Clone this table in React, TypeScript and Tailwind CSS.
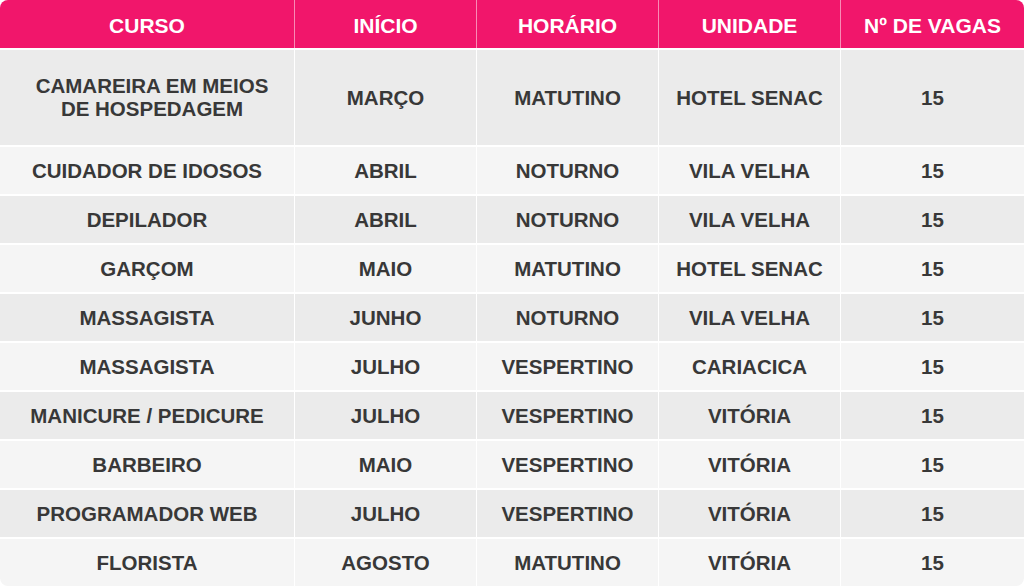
import React from 'react';

const rows = [
  ['CAMAREIRA EM MEIOS DE HOSPEDAGEM', 'MARÇO', 'MATUTINO', 'HOTEL SENAC', '15'],
  ['CUIDADOR DE IDOSOS', 'ABRIL', 'NOTURNO', 'VILA VELHA', '15'],
  ['DEPILADOR', 'ABRIL', 'NOTURNO', 'VILA VELHA', '15'],
  ['GARÇOM', 'MAIO', 'MATUTINO', 'HOTEL SENAC', '15'],
  ['MASSAGISTA', 'JUNHO', 'NOTURNO', 'VILA VELHA', '15'],
  ['MASSAGISTA', 'JULHO', 'VESPERTINO', 'CARIACICA', '15'],
  ['MANICURE / PEDICURE', 'JULHO', 'VESPERTINO', 'VITÓRIA', '15'],
  ['BARBEIRO', 'MAIO', 'VESPERTINO', 'VITÓRIA', '15'],
  ['PROGRAMADOR WEB', 'JULHO', 'VESPERTINO', 'VITÓRIA', '15'],
  ['FLORISTA', 'AGOSTO', 'MATUTINO', 'VITÓRIA', '15'],
];

const headers = ['CURSO', 'INÍCIO', 'HORÁRIO', 'UNIDADE', 'Nº DE VAGAS'];
const widths = ['w-[294px]', 'w-[182px]', 'w-[182px]', 'w-[182px]', 'flex-1'];

export default function App() {
  return (
    <div className="w-[1024px] h-[586px] bg-white font-['Liberation_Sans',Arial,sans-serif]">
      <div className="rounded-lg overflow-hidden">
        <div className="flex h-[48px] bg-[#f1166b]">
          {headers.map((h, i) => (
            <div
              key={h}
              className={`${widths[i]} flex items-center justify-center pt-[3px] text-[21px] font-bold text-white ${i > 0 ? 'border-l border-white/50' : ''}`}
            >
              {h}
            </div>
          ))}
        </div>

        {rows.map((r, ri) => (
          <div
            key={ri}
            className={`flex border-t-2 border-white ${ri === 0 ? 'h-[97px]' : 'h-[49px]'} ${ri % 2 === 0 ? 'bg-[#ebebeb]' : 'bg-[#f5f5f5]'}`}
          >
            {r.map((c, ci) => (
              <div
                key={ci}
                className={`${widths[ci]} flex items-center justify-center pb-[1px] text-center text-[20.5px] leading-[23px] font-bold text-[#383838] ${ci > 0 ? 'border-l border-white' : ''} ${ri === 0 && ci === 0 ? 'pl-[30px] pr-[20px]' : ''}`}
              >
                {c}
              </div>
            ))}
          </div>
        ))}
      </div>
    </div>
  );
}
